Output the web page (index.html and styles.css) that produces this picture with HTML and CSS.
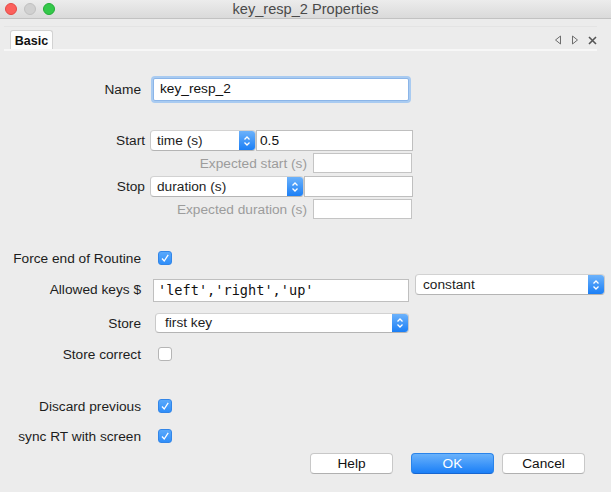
FILE: index.html
```html
<!DOCTYPE html>
<html>
<head>
<meta charset="utf-8">
<link rel="stylesheet" href="styles.css">
</head>
<body>
<div class="window">
  <header class="titlebar">
    <div class="lights">
      <span class="light red"></span>
      <span class="light gray"></span>
      <span class="light green"></span>
    </div>
    <div class="title">key_resp_2 Properties</div>
  </header>

  <div class="tabbar">
    <div class="tab">Basic</div>
    <div class="tabctl">
      <svg width="8" height="10" viewBox="0 0 8 10"><path d="M6.5 1 L1.5 5 L6.5 9 Z" fill="none" stroke="#6d6d6d" stroke-width="1"/></svg>
      <svg width="8" height="10" viewBox="0 0 8 10"><path d="M1.5 1 L6.5 5 L1.5 9 Z" fill="none" stroke="#6d6d6d" stroke-width="1"/></svg>
      <svg width="9" height="9" viewBox="0 0 9 9"><path d="M1 1 L8 8 M8 1 L1 8" stroke="#555" stroke-width="1.6"/></svg>
    </div>
  </div>

  <main class="form">
    <div class="row row-name">
      <label class="lbl">Name</label>
      <div class="input focused">key_resp_2</div>
    </div>

    <div class="timing">
      <div class="trow">
        <label class="tlbl">Start</label>
        <div class="select sel-start"><span>time (s)</span><span class="stepper"><svg width="8" height="12" viewBox="0 0 8 12"><path d="M1.5 4.5 L4 2 L6.5 4.5 M1.5 7.5 L4 10 L6.5 7.5" fill="none" stroke="#fff" stroke-width="1.3"/></svg></span></div>
        <div class="input tinput in-start">0.5</div>
      </div>
      <div class="erow">
        <label class="elbl">Expected start (s)</label>
        <div class="input einput"></div>
      </div>
      <div class="trow stop">
        <label class="tlbl">Stop</label>
        <div class="select sel-stop"><span>duration (s)</span><span class="stepper"><svg width="8" height="12" viewBox="0 0 8 12"><path d="M1.5 4.5 L4 2 L6.5 4.5 M1.5 7.5 L4 10 L6.5 7.5" fill="none" stroke="#fff" stroke-width="1.3"/></svg></span></div>
        <div class="input tinput in-stop"></div>
      </div>
      <div class="erow">
        <label class="elbl">Expected duration (s)</label>
        <div class="input einput"></div>
      </div>
    </div>

    <div class="row row-force">
      <label class="lbl">Force end of Routine</label>
      <span class="check on"><svg width="10" height="10" viewBox="0 0 10 10"><path d="M2 5.5 L4.2 8 L8.2 1.8" fill="none" stroke="#fff" stroke-width="1.3"/></svg></span>
    </div>

    <div class="row row-keys">
      <label class="lbl">Allowed keys $</label>
      <div class="input mono">'left','right','up'</div>
      <div class="select sel-const"><span>constant</span><span class="stepper"><svg width="8" height="12" viewBox="0 0 8 12"><path d="M1.5 4.5 L4 2 L6.5 4.5 M1.5 7.5 L4 10 L6.5 7.5" fill="none" stroke="#fff" stroke-width="1.3"/></svg></span></div>
    </div>

    <div class="row row-store">
      <label class="lbl">Store</label>
      <div class="select sel-store"><span>first key</span><span class="stepper"><svg width="8" height="12" viewBox="0 0 8 12"><path d="M1.5 4.5 L4 2 L6.5 4.5 M1.5 7.5 L4 10 L6.5 7.5" fill="none" stroke="#fff" stroke-width="1.3"/></svg></span></div>
    </div>

    <div class="row row-correct">
      <label class="lbl">Store correct</label>
      <span class="check"></span>
    </div>

    <div class="row row-discard">
      <label class="lbl">Discard previous</label>
      <span class="check on"><svg width="10" height="10" viewBox="0 0 10 10"><path d="M2 5.5 L4.2 8 L8.2 1.8" fill="none" stroke="#fff" stroke-width="1.3"/></svg></span>
    </div>

    <div class="row row-sync">
      <label class="lbl">sync RT with screen</label>
      <span class="check on"><svg width="10" height="10" viewBox="0 0 10 10"><path d="M2 5.5 L4.2 8 L8.2 1.8" fill="none" stroke="#fff" stroke-width="1.3"/></svg></span>
    </div>
  </main>

  <footer class="buttons">
    <button class="btn">Help</button>
    <button class="btn primary">OK</button>
    <button class="btn">Cancel</button>
  </footer>
</div>
</body>
</html>
```

FILE: styles.css
```css
* { box-sizing: border-box; }
html, body {
  margin: 0;
  padding: 0;
  background: #ececec;
}
body {
  font-family: "Liberation Sans", Arial, sans-serif;
  font-size: 13.7px;
  color: #1d1d1d;
  width: 611px;
  height: 492px;
  overflow: hidden;
}
.window {
  width: 611px;
  height: 492px;
  background: #ececec;
}

/* title bar */
.titlebar {
  height: 19px;
  display: flex;
  align-items: center;
  position: relative;
  background: linear-gradient(#ececec, #dadada);
  border-bottom: 1px solid #c2c2c2;
}
.lights {
  display: flex;
  gap: 7px;
  padding-left: 5px;
}
.light {
  width: 12px;
  height: 12px;
  border-radius: 50%;
  display: block;
}
.light.red { background: #fc605c; border: 1px solid #e44a45; }
.light.gray { background: #d0d0d0; border: 1px solid #c0c0c0; }
.light.green { background: #34c84a; border: 1px solid #22ad36; }
.title {
  position: absolute;
  left: 0;
  right: 0;
  top: 0;
  height: 18px;
  line-height: 18px;
  text-align: center;
  font-size: 14.6px;
  color: #4a4a4a;
}

/* tab bar */
.tabbar {
  margin: 7px 14px 0 4px;
  height: 25px;
  display: flex;
  align-items: flex-end;
  justify-content: space-between;
  border-top: 1px solid #e4e4e4;
  border-bottom: 2px solid #f7f7f7;
  padding-left: 6px;
}
.tab {
  width: 43px;
  height: 19px;
  background: #fdfdfd;
  border: 1px solid #d2d2d2;
  border-bottom: none;
  border-radius: 3px 3px 0 0;
  font-size: 12.5px;
  font-weight: bold;
  color: #111;
  text-align: center;
  line-height: 20px;
}
.tabctl {
  display: flex;
  align-items: center;
  gap: 9px;
  height: 18px;
  padding-right: 0;
  margin-bottom: 0;
}
.tabctl svg { display: block; }

/* form */
.form {
  display: flex;
  flex-direction: column;
}
.row {
  display: flex;
  align-items: center;
  height: 24px;
}
.lbl {
  width: 141px;
  text-align: right;
  margin-right: 12px;
  flex: none;
}
.input {
  background: #fff;
  border: 1px solid #bfbfbf;
  height: 22px;
  line-height: 20px;
  padding: 0 5px;
  color: #111;
  flex: none;
}
.row-name { margin-top: 27px; height: 23px; }
.row-name .input {
  width: 256px;
  height: 23px;
  border: 1px solid #8bb5e8;
  box-shadow: 0 0 0 2px #a9cbf1;
  border-radius: 2px;
  padding-left: 6px;
}

.select {
  display: flex;
  align-items: stretch;
  justify-content: space-between;
  background: #fff;
  border: 1px solid #c9c9c9;
  border-top-color: #d2d2d2;
  border-bottom-color: #b4b4b4;
  border-radius: 4px;
  height: 21px;
  flex: none;
  overflow: hidden;
}
.select > span:first-child {
  padding-left: 6px;
  line-height: 19px;
}
.stepper {
  width: 16px;
  background: linear-gradient(#6cb2fb, #1b7ff6);
  display: flex;
  align-items: center;
  justify-content: center;
}
.stepper svg { display: block; }

/* timing block */
.timing {
  margin-top: 29px;
  display: flex;
  flex-direction: column;
}
.trow {
  display: flex;
  align-items: center;
  height: 21px;
}
.trow.stop { margin-top: 3px; }
.tlbl {
  width: 145px;
  text-align: right;
  margin-right: 5px;
  flex: none;
}
.sel-start { width: 106px; }
.in-start { width: 157px; height: 21px; margin-left: 0; }
.sel-stop { width: 154px; }
.in-stop { width: 109px; height: 21px; }
.tinput { line-height: 19px; padding-left: 3px; }
.erow {
  display: flex;
  align-items: center;
  height: 20px;
  margin-top: 2px;
}
.elbl {
  width: 307px;
  text-align: right;
  margin-right: 6px;
  color: #9c9c9c;
  flex: none;
}
.einput {
  width: 99px;
  height: 20px;
  border-color: #c4c4c4;
}

/* checkboxes */
.check {
  width: 14px;
  height: 14px;
  margin-left: 5px;
  border-radius: 3px;
  background: #fff;
  border: 1px solid #b5b5b5;
  display: flex;
  align-items: center;
  justify-content: center;
  flex: none;
}
.check.on {
  background: linear-gradient(#5aa9fb, #2f8ef9);
  border-color: #3286e8;
}
.check svg { display: block; }

.row-force { margin-top: 27px; }
.row-keys {
  margin-top: 8px;
  align-items: flex-start;
}
.row-keys .lbl { line-height: 24px; }
.mono {
  width: 256px;
  height: 23px;
  margin-top: 1px;
  font-family: "DejaVu Sans Mono", "Liberation Mono", monospace;
  font-size: 13.6px;
  line-height: 21px;
  padding-left: 4px;
}
.sel-const {
  width: 190px;
  margin-left: 6px;
  margin-top: -4px;
}
.sel-const > span:first-child { padding-left: 7px; }
.row-store { margin-top: 9px; }
.sel-store {
  width: 254px;
  height: 20px;
  margin-left: 2px;
}
.sel-store > span:first-child { padding-left: 9px; line-height: 18px; }
.row-correct { margin-top: 7px; }
.row-discard { margin-top: 28px; }
.row-sync { margin-top: 6px; }

/* buttons */
.buttons {
  display: flex;
  margin-top: 5px;
  padding-left: 310px;
}
.btn {
  font-family: "Liberation Sans", Arial, sans-serif;
  font-size: 13.7px;
  width: 83px;
  height: 21px;
  background: #fff;
  border: 1px solid #c8c8c8;
  border-bottom-color: #b0b0b0;
  border-radius: 4px;
  color: #111;
  padding: 0;
  line-height: 19px;
}
.btn + .btn { margin-left: 8px; }
.btn.primary {
  margin-left: 18px;
  background: linear-gradient(#6ab2fb, #1a7ff7);
  border-color: #2a84ea;
  border-bottom-color: #1766d0;
  color: #fff;
}
```
